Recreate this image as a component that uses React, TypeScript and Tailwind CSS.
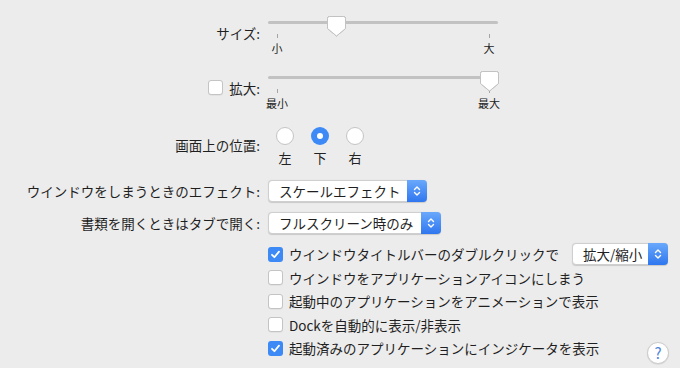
import React from 'react';

const text = 'text-[13.5px] leading-[18px] text-[#1f1f1f]';

function Thumb() {
  return (
    <svg width="19" height="21" viewBox="0 0 19 21" className="drop-shadow-[0_0.5px_0.5px_rgba(0,0,0,0.25)]">
      <path d="M2.5 0.5 H16.5 Q18.5 0.5 18.5 2.5 V12.5 L9.5 20 L0.5 12.5 V2.5 Q0.5 0.5 2.5 0.5 Z" fill="#fff" stroke="#c2c2c2" strokeWidth="1" />
    </svg>
  );
}

function Slider({ value, labels }: { value: number; labels: [string, string] }) {
  return (
    <div className="w-[230px]">
      <div className="relative h-[24px]">
        <div className="absolute left-0 right-0 top-[11px] h-[3px] rounded-full bg-[#c2c2c2]" />
        <div className="absolute top-[6px]" style={{ left: `${value * 212 - 0.5}px` }}>
          <Thumb />
        </div>
      </div>
      <div className="flex justify-between">
        {labels.map(l => (
          <div key={l} className="flex w-[18px] flex-col items-center">
            <div className="h-[4px] w-px bg-[#a5a5a5]" />
            <div className="mt-[3px] whitespace-nowrap text-[11px] leading-[14px] text-[#222]">{l}</div>
          </div>
        ))}
      </div>
    </div>
  );
}

function Checkbox({ checked }: { checked?: boolean }) {
  if (checked) {
    return (
      <div className="flex h-[15px] w-[15px] shrink-0 items-center justify-center rounded-[3px] bg-[#3d8af7]">
        <svg width="11" height="11" viewBox="0 0 11 11">
          <path d="M2 5.8 L4.4 8.2 L9 2.6" fill="none" stroke="#fff" strokeWidth="1.8" strokeLinecap="round" strokeLinejoin="round" />
        </svg>
      </div>
    );
  }
  return <div className="h-[15px] w-[15px] shrink-0 rounded-[3px] border border-[#c4c4c4] bg-white shadow-[0_0.5px_0.5px_rgba(0,0,0,0.08)]" />;
}

function Radio({ checked }: { checked?: boolean }) {
  if (checked) {
    return (
      <div className="flex h-[18px] w-[18px] items-center justify-center rounded-full bg-[#3d8af7]">
        <div className="h-[6px] w-[6px] rounded-full bg-white" />
      </div>
    );
  }
  return <div className="h-[18px] w-[18px] rounded-full border border-[#c4c4c4] bg-white" />;
}

function Popup({ label, width }: { label: string; width: string }) {
  return (
    <div className={`flex h-[22px] items-center rounded-[4px] border border-[#cfcfcf] bg-white shadow-[0_0.5px_1px_rgba(0,0,0,0.15)] ${width}`}>
      <span className={`flex-1 whitespace-nowrap pl-[10px] ${text}`}>{label}</span>
      <div className="-mr-px flex h-[22px] w-[20px] items-center justify-center rounded-r-[4px] bg-gradient-to-b from-[#69a8fb] to-[#2f76ef]">
        <svg width="8" height="12" viewBox="0 0 8 12">
          <path d="M1.5 4.5 L4 2 L6.5 4.5 M1.5 7.5 L4 10 L6.5 7.5" fill="none" stroke="#fff" strokeWidth="1.4" strokeLinecap="round" strokeLinejoin="round" />
        </svg>
      </div>
    </div>
  );
}

function Row({ label, children, className = '' }: { label: React.ReactNode; children: React.ReactNode; className?: string }) {
  return (
    <div className={`flex ${className}`}>
      <div className="flex w-[260px] shrink-0 items-center justify-end">{label}</div>
      <div className="ml-[8px]">{children}</div>
    </div>
  );
}

export default function App() {
  return (
    <div className="h-[368px] w-[680px] overflow-hidden bg-[#ececec] pt-[10px] font-['Noto_Sans_CJK_JP','Noto_Sans',sans-serif]">
      {/* Size */}
      <Row label={<span className={`h-[24px] ${text} flex items-center`}>サイズ:</span>}>
        <Slider value={0.28} labels={['小', '大']} />
      </Row>

      {/* Magnification */}
      <Row
        className="mt-[10px]"
        label={
          <div className="flex h-[24px] items-center gap-[6px]">
            <Checkbox />
            <span className={text}>拡大:</span>
          </div>
        }
      >
        <Slider value={1} labels={['最小', '最大']} />
      </Row>

      {/* Position */}
      <Row className="mt-[14px]" label={<span className={`flex h-[24px] items-center ${text}`}>画面上の位置:</span>}>
        <div className="flex gap-[17px] pl-[8px]">
          {['左', '下', '右'].map((l, i) => (
            <div key={l} className="flex w-[18px] flex-col items-center">
              <div className="flex h-[24px] items-center">
                <Radio checked={i === 1} />
              </div>
              <div className="mt-[3px] text-[13px] leading-[14px] text-[#222]">{l}</div>
            </div>
          ))}
        </div>
      </Row>

      {/* Minimize effect */}
      <Row className="mt-[15px]" label={<span className={text}>ウインドウをしまうときのエフェクト:</span>}>
        <Popup label="スケールエフェクト" width="w-[159px]" />
      </Row>

      <Row className="mt-[10px]" label={<span className={text}>書類を開くときはタブで開く:</span>}>
        <Popup label="フルスクリーン時のみ" width="w-[173px]" />
      </Row>

      {/* Checkboxes */}
      <div className="ml-[268px] mt-[8px] w-[400px]">
        <div className="flex h-[24px] items-center">
          <Checkbox checked />
          <span className={`ml-[6px] ${text}`}>ウインドウタイトルバーのダブルクリックで</span>
          <div className="ml-auto">
            <Popup label="拡大/縮小" width="w-[96px]" />
          </div>
        </div>
        <div className="flex h-[23.5px] items-center">
          <Checkbox />
          <span className={`ml-[6px] ${text}`}>ウインドウをアプリケーションアイコンにしまう</span>
        </div>
        <div className="flex h-[23.5px] items-center">
          <Checkbox />
          <span className={`ml-[6px] ${text}`}>起動中のアプリケーションをアニメーションで表示</span>
        </div>
        <div className="flex h-[23.5px] items-center">
          <Checkbox />
          <span className={`ml-[6px] ${text}`}>Dockを自動的に表示/非表示</span>
        </div>
        <div className="flex h-[23.5px] items-center">
          <Checkbox checked />
          <span className={`ml-[6px] ${text}`}>起動済みのアプリケーションにインジケータを表示</span>
          <div className="ml-auto mr-[-1px] mt-[9px] flex h-[22px] w-[22px] items-center justify-center rounded-full border border-[#cdcdcd] bg-white text-[15px] leading-none text-[#4f86d9] shadow-[0_0.5px_1px_rgba(0,0,0,0.12)]">
            ?
          </div>
        </div>
      </div>
    </div>
  );
}
